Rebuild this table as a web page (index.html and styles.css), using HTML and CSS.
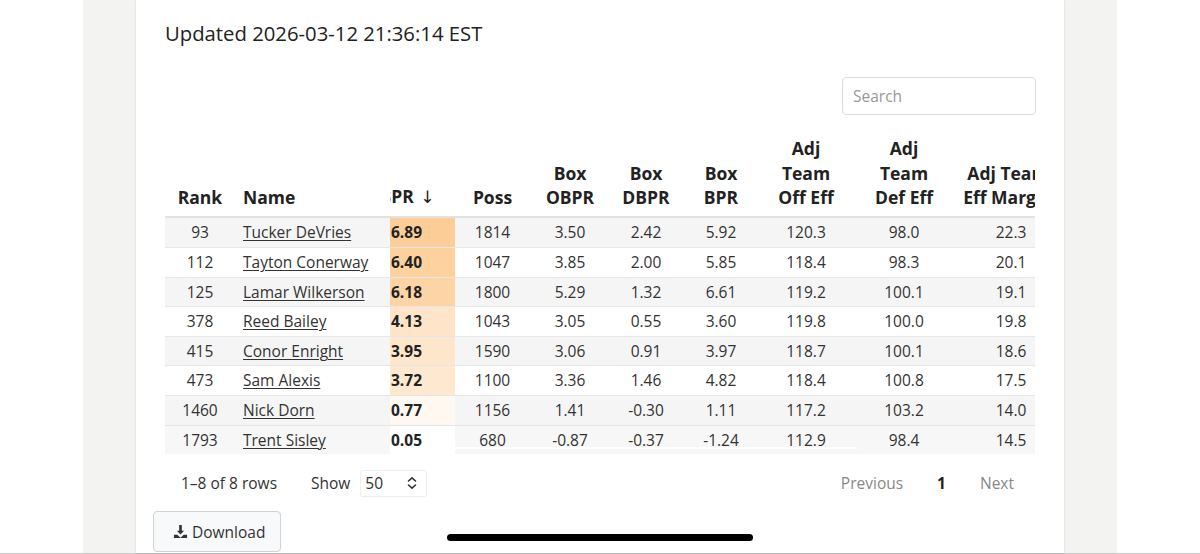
FILE: index.html
```html
<!DOCTYPE html>
<html>
<head>
<meta charset="utf-8">
<link rel="stylesheet" href="styles.css">
</head>
<body>
<div class="page">
  <div class="margin"></div>
  <div class="strip"></div>
  <main class="card">
    <div class="inner">
      <h1 class="title">Updated 2026-03-12 21:36:14 EST</h1>
      <div class="search-row">
        <div class="search">Search</div>
      </div>
      <div class="table-wrap">
        <table class="tbl">
          <colgroup>
            <col style="width:70px"><col style="width:155px"><col style="width:65px"><col style="width:75px"><col style="width:80px"><col style="width:72px"><col style="width:78px"><col style="width:92px"><col style="width:104px"><col style="width:104px">
          </colgroup>
          <thead>
            <tr>
              <th>Rank</th>
              <th class="left">Name</th>
              <th class="pr"><span class="clip">BPR <span class="arrow">↓</span></span></th>
              <th>Poss</th>
              <th>Box<br>OBPR</th>
              <th>Box<br>DBPR</th>
              <th>Box<br>BPR</th>
              <th>Adj<br>Team<br>Off Eff</th>
              <th>Adj<br>Team<br>Def Eff</th>
              <th class="nowrap">Adj Team<br>Eff Margin</th>
            </tr>
          </thead>
          <tbody>
            <tr class="odd"><td>93</td><td class="left"><a>Tucker DeVries</a></td><td class="pr" style="background:#fdcd98">6.89</td><td>1814</td><td>3.50</td><td>2.42</td><td>5.92</td><td>120.3</td><td>98.0</td><td class="last">22.3</td></tr>
            <tr><td>112</td><td class="left"><a>Tayton Conerway</a></td><td class="pr" style="background:#fdd29f">6.40</td><td>1047</td><td>3.85</td><td>2.00</td><td>5.85</td><td>118.4</td><td>98.3</td><td class="last">20.1</td></tr>
            <tr class="odd"><td>125</td><td class="left"><a>Lamar Wilkerson</a></td><td class="pr" style="background:#fdd4a5">6.18</td><td>1800</td><td>5.29</td><td>1.32</td><td>6.61</td><td>119.2</td><td>100.1</td><td class="last">19.1</td></tr>
            <tr><td>378</td><td class="left"><a>Reed Bailey</a></td><td class="pr" style="background:#fee4c8">4.13</td><td>1043</td><td>3.05</td><td>0.55</td><td>3.60</td><td>119.8</td><td>100.0</td><td class="last">19.8</td></tr>
            <tr class="odd"><td>415</td><td class="left"><a>Conor Enright</a></td><td class="pr" style="background:#fee6cb">3.95</td><td>1590</td><td>3.06</td><td>0.91</td><td>3.97</td><td>118.7</td><td>100.1</td><td class="last">18.6</td></tr>
            <tr><td>473</td><td class="left"><a>Sam Alexis</a></td><td class="pr" style="background:#fee8d0">3.72</td><td>1100</td><td>3.36</td><td>1.46</td><td>4.82</td><td>118.4</td><td>100.8</td><td class="last">17.5</td></tr>
            <tr class="odd"><td>1460</td><td class="left"><a>Nick Dorn</a></td><td class="pr" style="background:#fff8f1">0.77</td><td>1156</td><td>1.41</td><td>-0.30</td><td>1.11</td><td>117.2</td><td>103.2</td><td class="last">14.0</td></tr>
            <tr class="end"><td>1793</td><td class="left"><a>Trent Sisley</a></td><td class="pr" style="background:#ffffff">0.05</td><td>680</td><td>-0.87</td><td>-0.37</td><td>-1.24</td><td>112.9</td><td>98.4</td><td class="last">14.5</td></tr>
          </tbody>
        </table>
        <div class="scroll-thumb"></div>
      </div>
      <div class="pager">
        <div class="pager-left">
          <span class="rows-info">1–8 of 8 rows</span>
          <span class="show">Show</span>
          <div class="select">
            <span>50</span>
            <svg class="updown" width="12" height="14" viewBox="0 0 12 14"><polyline points="2.5,5 6,1.8 9.5,5" fill="none" stroke="#333" stroke-width="1.6" stroke-linecap="round" stroke-linejoin="round"/><polyline points="2.5,9 6,12.2 9.5,9" fill="none" stroke="#333" stroke-width="1.6" stroke-linecap="round" stroke-linejoin="round"/></svg>
          </div>
        </div>
        <div class="pager-right">
          <span class="pg">Previous</span>
          <span class="pg current">1</span>
          <span class="pg">Next</span>
        </div>
      </div>
    </div>
    <button class="download">
      <svg width="15" height="15" viewBox="0 0 16 16"><path d="M6.6 1h2.8v6.2h2.5L8 11.2 4.1 7.2h2.5z" fill="#333"/><path d="M1 11.5h3.6L8 14.6l3.4-3.1H15V15H1z" fill="#333"/></svg>
      Download
    </button>
  </main>
  <div class="strip"></div>
  <div class="margin"></div>
  <div class="home-bar"></div>
</div>
</body>
</html>
```

FILE: styles.css
```css
* { box-sizing: border-box; }
html, body { margin: 0; padding: 0; background: #fff; }
body {
  font-family: "Open Sans", "Liberation Sans", sans-serif;
  color: #333;
  overflow: hidden;
}
.page {
  display: flex;
  height: 554px;
  border-bottom: 1px solid #c8c8c8;
  position: relative;
}
.margin { width: 83px; flex: none; background: #fff; }
.strip { width: 53px; flex: none; background: #f3f3f2; }
.card {
  width: 928px;
  flex: none;
  background: #fff;
  box-shadow: 0 0 2px rgba(0,0,0,0.15);
  padding: 17px 28px 0 17px;
  position: relative;
  z-index: 1;
}
.inner { padding-left: 12px; }
.title {
  margin: 0;
  font-size: 20.3px;
  font-weight: 400;
  line-height: 32px;
  color: #222;
}
.search-row {
  display: flex;
  justify-content: flex-end;
  margin-top: 28px;
}
.search {
  width: 194px;
  height: 38px;
  border: 1px solid #dcdcdc;
  border-radius: 4px;
  padding: 0 10px;
  font-size: 15.5px;
  line-height: 36px;
  color: #999;
}
.table-wrap {
  margin-top: 15px;
  width: 870px;
  overflow: hidden;
  position: relative;
}
.tbl {
  table-layout: fixed;
  border-collapse: collapse;
  width: 895px;
}
.tbl th {
  font-size: 17.5px;
  font-weight: 700;
  line-height: 24.5px;
  color: #222;
  text-align: center;
  vertical-align: bottom;
  padding: 6px 4px 6px 4px;
  border-bottom: 2px solid #e2e2e2;
}
.tbl th.left, .tbl td.left { text-align: left; padding-left: 8px; }
.tbl th.nowrap { white-space: nowrap; }
.tbl th.pr { text-align: left; padding-left: 0; overflow: hidden; white-space: nowrap; }
.clip { display: inline-block; margin-left: -10.5px; }
.arrow { font-weight: 400; font-family: "DejaVu Sans", sans-serif; font-size: 17px; margin-left: 2px; }
.tbl td {
  font-size: 15.5px;
  line-height: 20.6px;
  padding: 4px 4px;
  text-align: center;
  border-top: 1px solid #e6e6e6;
  white-space: nowrap;
  color: #333;
}
.tbl tbody tr:first-child td { border-top: none; padding-top: 4.5px; padding-bottom: 4.5px; }
.tbl tr.odd td { background: #f5f5f5; }
.tbl tr.end td { background: #f7f7f7; }
.tbl td.pr {
  text-align: left;
  padding-left: 1px;
  font-weight: 700;
  color: #222;
}
.tbl td.last { padding-left: 10px; }
.tbl a { color: #333; text-decoration: underline; text-underline-offset: 2px; text-decoration-thickness: 1px; }
.scroll-thumb {
  position: absolute;
  left: 290px;
  width: 402px;
  bottom: 5px;
  height: 2px;
  background: rgba(255,255,255,0.9);
  border-radius: 1px;
}
.pager {
  display: flex;
  justify-content: space-between;
  align-items: center;
  margin-top: 15px;
  height: 28px;
  font-size: 15.5px;
}
.pager-left { display: flex; align-items: center; padding-left: 16px; }
.rows-info { color: #333; }
.show { margin-left: 34px; color: #333; }
.select {
  margin-left: 10px;
  width: 67px;
  height: 27px;
  border: 1px solid #eeeeee;
  border-radius: 3px;
  display: flex;
  align-items: center;
  justify-content: space-between;
  padding: 0 8px 0 4px;
  color: #333;
}
.updown { display: block; }
.pager-right { display: flex; align-items: center; margin-right: 22px; }
.pg { color: #888; }
.pg.current { color: #222; font-weight: 700; margin: 0 34px; }
.download {
  margin-top: 14px;
  display: flex;
  align-items: center;
  gap: 4px;
  width: 128px;
  height: 41px;
  padding: 0 0 0 19px;
  border: 1px solid #cfd2d4;
  border-radius: 4px;
  background: #f8f9fa;
  font-family: "Open Sans", "Liberation Sans", sans-serif;
  font-size: 15.5px;
  color: #333;
}
.home-bar {
  position: absolute;
  left: 447px;
  top: 534px;
  width: 306px;
  height: 7px;
  border-radius: 4px;
  background: #000;
  z-index: 5;
}
```
